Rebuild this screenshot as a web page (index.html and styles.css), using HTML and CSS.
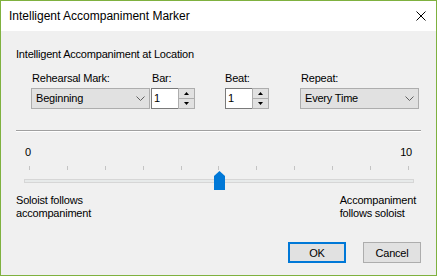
FILE: index.html
```html
<!DOCTYPE html>
<html>
<head>
<meta charset="utf-8">
<title>Intelligent Accompaniment Marker</title>
<link rel="stylesheet" href="styles.css">
</head>
<body>
<div class="window">
  <div class="titlebar">
    <span class="title">Intelligent Accompaniment Marker</span>
    <svg class="close" width="10" height="10" viewBox="0 0 10 10"><path d="M0.5 0.5 L9.5 9.5 M9.5 0.5 L0.5 9.5" stroke="#000" stroke-width="1" fill="none"/></svg>
  </div>
  <div class="content">
    <div class="group-label">Intelligent Accompaniment at Location</div>
    <div class="fields">
      <div class="field f-mark">
        <div class="label">Rehearsal Mark:</div>
        <div class="combo"><span>Beginning</span><svg class="chev" width="9" height="5" viewBox="0 0 9 5"><path d="M0.5 0.5 L4.5 4.5 L8.5 0.5" stroke="#606060" fill="none"/></svg></div>
      </div>
      <div class="field f-bar">
        <div class="label">Bar:</div>
        <div class="spin">
          <div class="edit">1</div>
          <div class="updown">
            <div class="ud"><svg width="5" height="3" viewBox="0 0 5 3"><path d="M2.5 0 L5 3 L0 3 Z" fill="#000"/></svg></div>
            <div class="ud"><svg width="5" height="3" viewBox="0 0 5 3"><path d="M0 0 L5 0 L2.5 3 Z" fill="#000"/></svg></div>
          </div>
        </div>
      </div>
      <div class="field f-beat">
        <div class="label">Beat:</div>
        <div class="spin">
          <div class="edit">1</div>
          <div class="updown">
            <div class="ud"><svg width="5" height="3" viewBox="0 0 5 3"><path d="M2.5 0 L5 3 L0 3 Z" fill="#000"/></svg></div>
            <div class="ud"><svg width="5" height="3" viewBox="0 0 5 3"><path d="M0 0 L5 0 L2.5 3 Z" fill="#000"/></svg></div>
          </div>
        </div>
      </div>
      <div class="field f-repeat">
        <div class="label">Repeat:</div>
        <div class="combo"><span>Every Time</span><svg class="chev" width="9" height="5" viewBox="0 0 9 5"><path d="M0.5 0.5 L4.5 4.5 L8.5 0.5" stroke="#606060" fill="none"/></svg></div>
      </div>
    </div>
    <div class="separator"></div>
    <div class="slider">
      <div class="scale-labels"><span>0</span><span>10</span></div>
      <div class="ticks">
        <i></i><i></i><i></i><i></i><i></i><i></i><i></i><i></i><i></i><i></i><i></i>
      </div>
      <div class="track"><div class="thumb"></div></div>
    </div>
    <div class="ends">
      <div class="end">Soloist follows<br>accompaniment</div>
      <div class="end end-right">Accompaniment<br>follows soloist</div>
    </div>
    <div class="buttons">
      <button class="btn btn-default">OK</button>
      <button class="btn">Cancel</button>
    </div>
  </div>
</div>
</body>
</html>
```
FILE: styles.css
```css
html, body {
  margin: 0;
  padding: 0;
  background: #f0f0f0;
}
body {
  font-family: "Liberation Sans", Arial, sans-serif;
  font-size: 11px;
  line-height: 13px;
  letter-spacing: -0.2px;
  color: #000;
}
.window {
  width: 437px;
  height: 276px;
  box-sizing: border-box;
  border: 1px solid #7fb13f;
  background: #f0f0f0;
  display: flex;
  flex-direction: column;
}
.titlebar {
  height: 30px;
  flex: none;
  background: #fff;
  display: flex;
  align-items: center;
  justify-content: space-between;
  padding: 0 10px 0 8px;
}
.title {
  font-size: 12px;
  letter-spacing: 0;
  line-height: 16px;
  color: #000;
}
.close {
  display: block;
}
.content {
  flex: 1;
  padding: 17px 15px 0 15px;
  display: flex;
  flex-direction: column;
}
.group-label {
  height: 13px;
}
.fields {
  display: flex;
  margin-top: 11px;
  padding-left: 15px;
}
.field {
  display: flex;
  flex-direction: column;
}
.field .label {
  height: 13px;
  margin-bottom: 3px;
  padding-left: 1px;
}
.f-mark { width: 119px; }
.f-bar { margin-left: 1px; }
.f-beat { margin-left: 30px; }
.f-repeat { margin-left: 31px; width: 119px; }
.f-beat .label { padding-left: 0; }
.combo {
  height: 21px;
  box-sizing: border-box;
  border: 1px solid #adadad;
  background: #e1e1e1;
  display: flex;
  align-items: center;
  justify-content: space-between;
  padding: 0 4px 0 4px;
}
.chev { display: block; }
.spin {
  display: flex;
  height: 21px;
}
.edit {
  width: 27px;
  box-sizing: border-box;
  border: 1px solid #7a7a7a;
  border-right: none;
  background: #fff;
  padding-left: 2px;
  line-height: 19px;
}
.updown {
  width: 17px;
  box-sizing: border-box;
  border: 1px solid #adadad;
  background: #e1e1e1;
  display: flex;
  flex-direction: column;
}
.ud {
  flex: 1;
  display: flex;
  align-items: center;
  justify-content: center;
}
.ud + .ud {
  border-top: 1px solid #adadad;
}
.ud svg { display: block; }
.separator {
  margin-top: 21px;
  height: 1px;
  background: #a0a0a0;
  border-bottom: 1px solid #fff;
}
.slider {
  margin-top: 14px;
  display: flex;
  flex-direction: column;
}
.scale-labels {
  display: flex;
  justify-content: space-between;
  padding: 0 9px 0 9px;
  height: 13px;
}
.ticks {
  display: flex;
  justify-content: space-between;
  margin: 7px 12px 0 13px;
  height: 4px;
}
.ticks i {
  display: block;
  width: 1px;
  height: 4px;
  background: #c4c4c4;
}
.track {
  position: relative;
  margin: 9px 7px 0 8px;
  height: 4px;
  box-sizing: border-box;
  border: 1px solid #d6d6d6;
  background: #e7eaea;
}
.thumb {
  position: absolute;
  left: 189px;
  top: -9px;
  width: 11px;
  height: 19px;
  background: #0078d7;
  clip-path: polygon(0 5px, 5.5px 0, 11px 5px, 11px 19px, 0 19px);
}
.ends {
  margin-top: 11px;
  display: flex;
  justify-content: space-between;
}
.end-right {
  margin-right: 5px;
}
.buttons {
  margin-top: auto;
  margin-bottom: 12px;
  display: flex;
  justify-content: flex-end;
  gap: 17px;
}
.btn {
  width: 58px;
  height: 21px;
  box-sizing: border-box;
  border: 1px solid #adadad;
  background: #e1e1e1;
  font-family: "Liberation Sans", Arial, sans-serif;
  font-size: 11px;
  letter-spacing: -0.2px;
  color: #000;
  padding: 0;
  margin: 0;
}
.btn-default {
  border: 2px solid #0078d7;
}
```
